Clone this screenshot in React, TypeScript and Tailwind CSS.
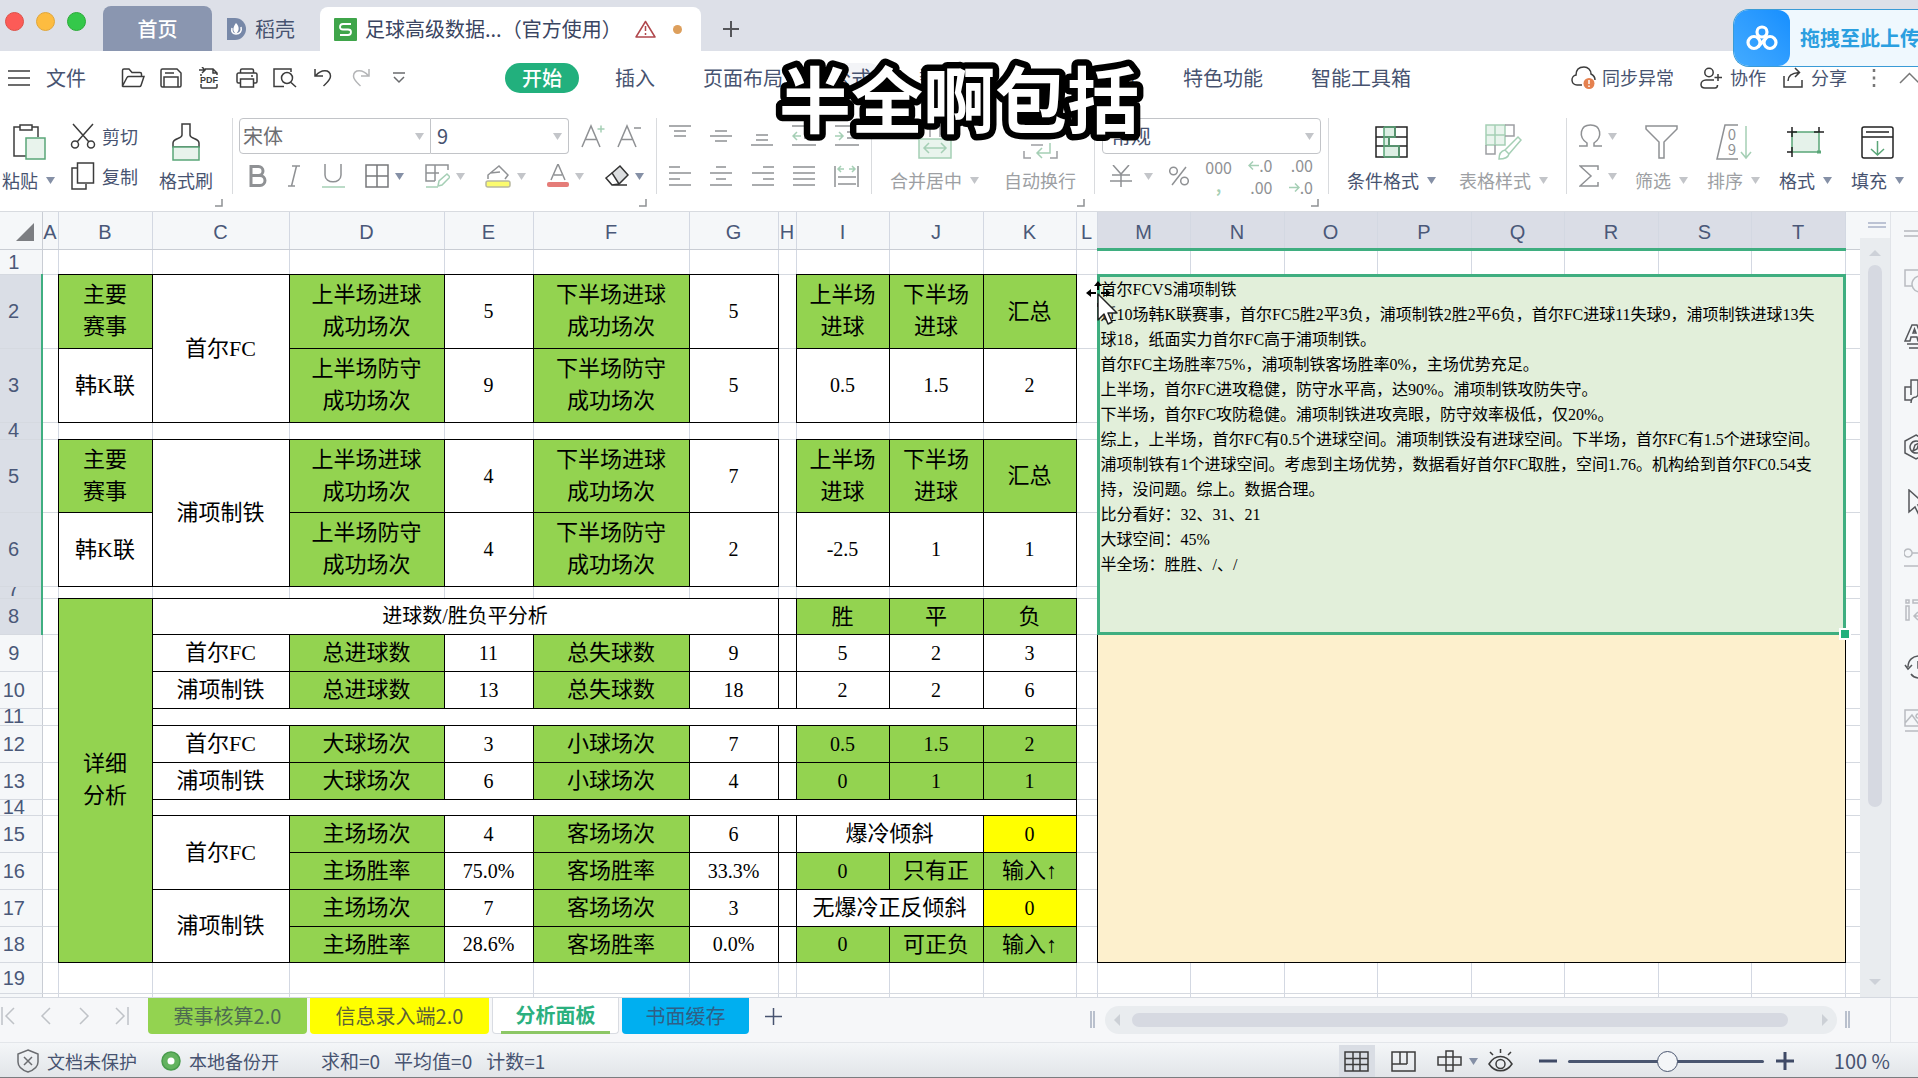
import React from 'react';

const SANS = "font-['Noto_Sans_CJK_SC',sans-serif]";

type CellKind = 'blank' | 'white' | 'green' | 'yellow' | 'note' | 'empty';

interface Cell {
  kind: CellKind;
  text?: string;
  rows?: number;
  cols?: number;
  small?: boolean;
}

interface Row {
  id: string;
  height: string;
  cells: Cell[];
}

const blank = (count = 1): Cell[] => Array.from({ length: count }, () => ({ kind: 'blank' }) as Cell);
const w = (text = '', rows = 1, cols = 1): Cell => ({ kind: 'white', text, rows, cols });
const g = (text: string, rows = 1): Cell => ({ kind: 'green', text, rows });
const y = (text: string): Cell => ({ kind: 'yellow', text });

const rows: Row[] = [
  { id: '1', height: 'h-[25px]', cells: blank(21) },
  {
    id: '2',
    height: 'h-[74px]',
    cells: [
      ...blank(), g('主要\n赛事'), w('首尔FC', 2), g('上半场进球\n成功场次'), w('5'), g('下半场进球\n成功场次'), w('5'),
      ...blank(), g('上半场\n进球'), g('下半场\n进球'), g('汇总'), ...blank(), { kind: 'note', rows: 7, cols: 8 }, ...blank(),
    ],
  },
  {
    id: '3',
    height: 'h-[74px]',
    cells: [
      ...blank(), w('韩K联'), g('上半场防守\n成功场次'), w('9'), g('下半场防守\n成功场次'), w('5'),
      ...blank(), w('0.5'), w('1.5'), w('2'), ...blank(2),
    ],
  },
  { id: '4', height: 'h-[17px]', cells: blank(13) },
  {
    id: '5',
    height: 'h-[73px]',
    cells: [
      ...blank(), g('主要\n赛事'), w('浦项制铁', 2), g('上半场进球\n成功场次'), w('4'), g('下半场进球\n成功场次'), w('7'),
      ...blank(), g('上半场\n进球'), g('下半场\n进球'), g('汇总'), ...blank(2),
    ],
  },
  {
    id: '6',
    height: 'h-[74px]',
    cells: [
      ...blank(), w('韩K联'), g('上半场防守\n成功场次'), w('4'), g('下半场防守\n成功场次'), w('2'),
      ...blank(), w('-2.5'), w('1'), w('1'), ...blank(2),
    ],
  },
  { id: '7', height: 'h-[12px]', cells: blank(13) },
  {
    id: '8',
    height: 'h-[36px]',
    cells: [
      ...blank(), g('详细\n分析', 11), { ...w('进球数/胜负平分析', 1, 5), small: true }, w(), g('胜'), g('平'), g('负'), ...blank(2),
    ],
  },
  {
    id: '9',
    height: 'h-[37px]',
    cells: [
      ...blank(), w('首尔FC'), g('总进球数'), w('11'), g('总失球数'), w('9'), w(), w('5'), w('2'), w('3'),
      ...blank(), { kind: 'empty', rows: 10, cols: 8 }, ...blank(),
    ],
  },
  {
    id: '10',
    height: 'h-[37px]',
    cells: [...blank(), w('浦项制铁'), g('总进球数'), w('13'), g('总失球数'), w('18'), w(), w('2'), w('2'), w('6'), ...blank(2)],
  },
  { id: '11', height: 'h-[17px]', cells: [...blank(), w('', 1, 9), ...blank(2)] },
  {
    id: '12',
    height: 'h-[37px]',
    cells: [...blank(), w('首尔FC'), g('大球场次'), w('3'), g('小球场次'), w('7'), w(), g('0.5'), g('1.5'), g('2'), ...blank(2)],
  },
  {
    id: '13',
    height: 'h-[37px]',
    cells: [...blank(), w('浦项制铁'), g('大球场次'), w('6'), g('小球场次'), w('4'), w(), g('0'), g('1'), g('1'), ...blank(2)],
  },
  { id: '14', height: 'h-[16px]', cells: [...blank(), w('', 1, 9), ...blank(2)] },
  {
    id: '15',
    height: 'h-[37px]',
    cells: [...blank(), w('首尔FC', 2), g('主场场次'), w('4'), g('客场场次'), w('6'), w(), w('爆冷倾斜', 1, 2), y('0'), ...blank(2)],
  },
  {
    id: '16',
    height: 'h-[37px]',
    cells: [...blank(), g('主场胜率'), w('75.0%'), g('客场胜率'), w('33.3%'), w(), g('0'), g('只有正'), g('输入↑'), ...blank(2)],
  },
  {
    id: '17',
    height: 'h-[37px]',
    cells: [...blank(), w('浦项制铁', 2), g('主场场次'), w('7'), g('客场场次'), w('3'), w(), w('无爆冷正反倾斜', 1, 2), y('0'), ...blank(2)],
  },
  {
    id: '18',
    height: 'h-[36px]',
    cells: [...blank(), g('主场胜率'), w('28.6%'), g('客场胜率'), w('0.0%'), w(), g('0'), g('可正负'), g('输入↑'), ...blank(2)],
  },
  { id: '19', height: 'h-[31px]', cells: blank(21) },
  { id: '', height: 'h-[4px]', cells: blank(21) },
];

const columns = [
  { id: 'A', width: 'w-[16px]' },
  { id: 'B', width: 'w-[94px]' },
  { id: 'C', width: 'w-[137px]' },
  { id: 'D', width: 'w-[155px]' },
  { id: 'E', width: 'w-[89px]' },
  { id: 'F', width: 'w-[156px]' },
  { id: 'G', width: 'w-[89px]' },
  { id: 'H', width: 'w-[18px]' },
  { id: 'I', width: 'w-[93px]' },
  { id: 'J', width: 'w-[94px]' },
  { id: 'K', width: 'w-[93px]' },
  { id: 'L', width: 'w-[21px]' },
  { id: 'M', width: 'w-[93px]' },
  { id: 'N', width: 'w-[94px]' },
  { id: 'O', width: 'w-[93px]' },
  { id: 'P', width: 'w-[94px]' },
  { id: 'Q', width: 'w-[93px]' },
  { id: 'R', width: 'w-[94px]' },
  { id: 'S', width: 'w-[93px]' },
  { id: 'T', width: 'w-[94px]' },
];

const noteLines = [
  '首尔FCVS浦项制铁',
  '近10场韩K联赛事，首尔FC5胜2平3负，浦项制铁2胜2平6负，首尔FC进球11失球9，浦项制铁进球13失',
  '球18，纸面实力首尔FC高于浦项制铁。',
  '首尔FC主场胜率75%，浦项制铁客场胜率0%，主场优势充足。',
  '上半场，首尔FC进攻稳健，防守水平高，达90%。浦项制铁攻防失守。',
  '下半场，首尔FC攻防稳健。浦项制铁进攻亮眼，防守效率极低，仅20%。',
  '综上，上半场，首尔FC有0.5个进球空间。浦项制铁没有进球空间。下半场，首尔FC有1.5个进球空间。',
  '浦项制铁有1个进球空间。考虑到主场优势，数据看好首尔FC取胜，空间1.76。机构给到首尔FC0.54支',
  '持，没问题。综上。数据合理。',
  '比分看好：32、31、21',
  '大球空间：45%',
  '半全场：胜胜、/、/',
];

const cellStyle: Record<CellKind, string> = {
  blank: '',
  white: 'border border-black bg-white',
  green: 'border border-black bg-[#93d350]',
  yellow: 'border border-black bg-[#ffff00]',
  note: 'relative bg-[#e2efda] align-top',
  empty: 'border border-black bg-[#fdf0cd]',
};

interface SvgProps {
  w: number;
  h: number;
  className?: string;
  children: React.ReactNode;
}

const Svg: React.FC<SvgProps> = ({ w: width, h: height, className = 'text-[#3c3c3c]', children }) => (
  <svg
    width={width}
    height={height}
    viewBox={`0 0 ${width} ${height}`}
    fill="none"
    stroke="currentColor"
    strokeWidth="1.5"
    className={`shrink-0 ${className}`}
    aria-hidden="true"
  >
    {children}
  </svg>
);

const Caret: React.FC<{ dim?: boolean }> = ({ dim }) => (
  <Svg w={9} h={7} className={dim ? 'text-[#c3c5c9]' : 'text-[#8590a6]'}>
    <path d="M0 0h9L4.500 7z" fill="currentColor" stroke="none" />
  </Svg>
);

const GREEN = '#5aa678';
const PALE = '#a5cfb5';

/* ---------- title bar ---------- */

const TitleBar: React.FC = () => (
  <header className="flex h-[51px] shrink-0 items-end bg-[#dde0e8] text-[20px] text-[#475370]">
    <div className="flex w-[103px] shrink-0 gap-3 self-start pl-[5px] pt-3">
      <button aria-label="关闭" className="size-[19px] rounded-full border border-[#dd5148] bg-[#fc5b57]" />
      <button aria-label="最小化" className="size-[19px] rounded-full border border-[#e0a63a] bg-[#fdbc40]" />
      <button aria-label="缩放" className="size-[19px] rounded-full border border-[#2bab38] bg-[#34c84a]" />
    </div>
    <button className="h-[45px] w-[109px] rounded-t-lg bg-[#8a96b0] font-medium text-white">首页</button>
    <button className="flex h-[45px] w-[108px] items-center gap-2 pl-[15px]">
      <Svg w={20} h={22}>
        <path d="M0 0h8a11 11 0 0 1 0 22H0z" fill="#7788a8" stroke="none" />
        <path d="M9 5c4 4 3 8 0 11-4-3-3-7 0-11z" fill="#fff" stroke="none" />
        <path d="M5 10c-1 4 1 6 4 6M14 9c1 4-1 7-5 7" stroke="#fff" />
      </Svg>
      稻壳
    </button>
    <div className="flex h-11 w-[381px] items-center rounded-t-lg bg-white pl-[14px] text-[#3a4562]">
      <Svg w={23} h={23}>
        <rect width="23" height="23" rx="1" fill="#3fa54a" stroke="none" />
        <path d="M17 6H9a3 3 0 0 0-3 3c0 2 1 2.500 3 2.500h5c2 0 3 .8 3 2.500a3 3 0 0 1-3 3H6" stroke="#fff" strokeWidth="1.800" />
      </Svg>
      <span className="w-[278px] whitespace-nowrap pl-2">足球高级数据...（官方使用）</span>
      <Svg w={21} h={18} className="text-[#b0474c]">
        <path d="M10.500 1.500L20 17H1z" strokeLinejoin="round" />
        <path d="M10.500 6v5M10.500 13v2" />
      </Svg>
      <span className="ml-[17px] size-[9px] rounded-full bg-[#dd9f5c]" />
    </div>
    <button aria-label="新建标签" className="flex h-[45px] w-[60px] items-center justify-center">
      <Svg w={16} h={16} className="text-[#55565a]">
        <path d="M8 0v16M0 8h16" strokeWidth="2" />
      </Svg>
    </button>
  </header>
);

const UploadBadge: React.FC = () => (
  <div className="absolute right-0 top-[9px] flex h-[58px] w-[185px] items-center overflow-hidden rounded-l-2xl border border-r-0 border-[#3a9bd6] bg-[#eff8fe]">
    <div className="flex h-full w-[56px] shrink-0 items-center justify-center rounded-xl bg-gradient-to-tr from-[#43abff] to-[#158fff]">
      <Svg w={32} h={28} className="text-white">
        <circle cx="16" cy="8" r="5" strokeWidth="3.200" />
        <circle cx="8" cy="18.500" r="6" strokeWidth="3.200" />
        <circle cx="24" cy="18.500" r="6" strokeWidth="3.200" />
        <path d="M12 23l8-9" strokeWidth="3.200" />
      </Svg>
    </div>
    <span className="whitespace-nowrap pl-[10px] text-[20px] font-bold text-[#2b9fe0]">拖拽至此上传</span>
  </div>
);

/* ---------- menu ---------- */

const quickIcons: { label: string; icon: React.ReactNode }[] = [
  {
    label: '打开',
    icon: (
      <Svg w={24} h={20}>
        <path d="M1.500 18V2.500A1.500 1.500 0 0 1 3 1h5l3 3.500h8A1.500 1.500 0 0 1 20.500 6v2M1.500 18l4.500-8.500A2 2 0 0 1 7.800 8.500H23l-3 9a1.500 1.500 0 0 1-1.500 1H2z" />
      </Svg>
    ),
  },
  {
    label: '保存',
    icon: (
      <Svg w={22} h={20}>
        <path d="M1 2.500A1.500 1.500 0 0 1 2.500 1H17l4 4v12.500a1.500 1.500 0 0 1-1.500 1.500h-17A1.500 1.500 0 0 1 1 17.500zM4 19V9h14v10M5 5h9" />
      </Svg>
    ),
  },
  {
    label: '输出为PDF',
    icon: (
      <Svg w={22} h={22}>
        <path d="M7 2h8l4 4v2M15 2v4h4M3 9v-2M3 17v3a1 1 0 0 0 1 1h14a1 1 0 0 0 1-1v-3M1 3h5M4 0l3 3-3 3" />
        <text x="11" y="16" textAnchor="middle" fontSize="9" fontWeight="700" fill="currentColor" stroke="none" fontFamily="Liberation Sans, sans-serif">PDF</text>
      </Svg>
    ),
  },
  {
    label: '打印',
    icon: (
      <Svg w={22} h={20}>
        <path d="M4.500 5V2.500A1.500 1.500 0 0 1 6 1h10a1.500 1.500 0 0 1 1.500 1.500V5M4.500 15H2.500A1.500 1.500 0 0 1 1 13.500v-7A1.500 1.500 0 0 1 2.500 5h17A1.500 1.500 0 0 1 21 6.500v7a1.500 1.500 0 0 1-1.500 1.500h-2M4.500 11h13v8h-13zM15 8h2" />
      </Svg>
    ),
  },
  {
    label: '打印预览',
    icon: (
      <Svg w={24} h={20}>
        <path d="M18 4V1H1v17.500h10" />
        <circle cx="14" cy="10" r="5.500" />
        <path d="M18 14.500l5 4.500" />
      </Svg>
    ),
  },
  {
    label: '撤销',
    icon: (
      <Svg w={20} h={19}>
        <path d="M2 1v7h8M2.500 8C8 1 17 1 17.500 8c0 4-4 7-7 10" />
      </Svg>
    ),
  },
  {
    label: '恢复',
    icon: (
      <Svg w={20} h={19} className="text-[#b4b5b7]">
        <path d="M18 1v7h-8M17.500 8C12 1 3 1 2.500 8c0 4 4 7 7 10" />
      </Svg>
    ),
  },
  {
    label: '更多',
    icon: (
      <Svg w={12} h={12} className="text-[#6a6b6e]">
        <path d="M0 1h12M1 5l5 5 5-5" />
      </Svg>
    ),
  },
];

const menus = ['插入', '页面布局', '公式', '数据', '审阅', '视图', '特色功能', '智能工具箱'];

const MenuBar: React.FC = () => (
  <nav className="flex h-[55px] shrink-0 items-center whitespace-nowrap pb-0.5 pl-2 text-[20px] text-[#475370]">
    <button className="flex items-center gap-4">
      <Svg w={22} h={16}>
        <path d="M0 1h22M0 8h22M0 15h22" />
      </Svg>
      文件
    </button>
    <div className="ml-[28px] flex items-center">
      {quickIcons.map((q) => (
        <button key={q.label} aria-label={q.label} className="flex w-[38px] justify-center">
          {q.icon}
        </button>
      ))}
    </div>
    <button className="ml-[87px] h-[30px] w-[74px] rounded-full bg-[#22b07d] font-medium leading-[30px] text-white">开始</button>
    <div className="ml-6 flex gap-6">
      {menus.map((m) => (
        <button key={m} className={`rounded-full px-3 leading-[30px] ${m === '公式' ? 'bg-[#f3f4f7]' : ''}`}>
          {m}
        </button>
      ))}
    </div>
    <div className="ml-auto flex items-center text-[18px]">
      <button className="flex items-center gap-1.5">
        <Svg w={25} h={24}>
          <path d="M11 19H6a5 5 0 0 1-1-9.900C5 1 11 1 13 1c4 0 7 3 7 7 2 1 4 3 4 6" />
          <circle cx="18" cy="17.500" r="5.500" fill="#e5814f" stroke="none" />
          <path d="M18 14v4M18 19.500v1.500" stroke="#fff" />
        </Svg>
        同步异常
      </button>
      <button className="ml-[26px] flex items-center gap-2">
        <Svg w={22} h={22}>
          <circle cx="9" cy="5.500" r="4.200" />
          <path d="M14 13H6c-3 0-5 2-5 4.500S3 21 5 21h10c1.500 0 2.500-1 2.500-3M18 7v7M14.500 10.500H22" />
        </Svg>
        协作
      </button>
      <button className="ml-[17px] flex items-center gap-2">
        <Svg w={20} h={21}>
          <path d="M1 9v11h18v-7M5 14c0-6 4-8 11-8.500M12 1l4.500 4.500L12 10" />
        </Svg>
        分享
      </button>
      <button aria-label="更多选项" className="ml-[25px]">
        <Svg w={4} h={18} className="text-[#777]">
          <path d="M2 0v3M2 7.500v3M2 15v3" strokeWidth="2.500" />
        </Svg>
      </button>
      <button aria-label="收起功能区" className="ml-[23px] w-[19px] overflow-hidden">
        <Svg w={20} h={12} className="text-[#777]">
          <path d="M1 11l9.500-9.500L20 11" />
        </Svg>
      </button>
    </div>
  </nav>
);

/* ---------- ribbon ---------- */

const Group: React.FC<{ className: string; corner?: boolean; last?: boolean; children: React.ReactNode }> = ({
  className,
  corner,
  last,
  children,
}) => (
  <div className={className}>
    <div className={`flex h-[76px] ${last ? '' : 'border-r border-[#d9dbde]'}`}>{children}</div>
    {corner && (
      <div className="mr-[10px] mt-[5px] flex justify-end">
        <Svg w={8} h={8} className="text-[#8f9194]">
          <path d="M7 0v7H0" />
        </Svg>
      </div>
    )}
  </div>
);

const BigButton: React.FC<{ label: string; icon: React.ReactNode; dim?: boolean; caret?: boolean; className?: string }> = ({
  label,
  icon,
  dim,
  caret,
  className = '',
}) => (
  <button className={`flex shrink-0 flex-col items-center whitespace-nowrap ${dim ? 'text-[#9d9fa3]' : 'text-[#475370]'} ${className}`}>
    <span className="flex h-12 items-center">{icon}</span>
    <span className="flex h-7 items-center gap-2">
      {label}
      {caret && <Caret dim={dim} />}
    </span>
  </button>
);

const Tool: React.FC<{ label: string; className?: string; caret?: 'dim' | 'dark'; children: React.ReactNode }> = ({
  label,
  className = '',
  caret,
  children,
}) => (
  <button aria-label={label} className={`flex h-9 shrink-0 items-center justify-center gap-1.5 ${className}`}>
    {children}
    {caret && <Caret dim={caret === 'dim'} />}
  </button>
);

const SelectBox: React.FC<{ label: string; value: string; className: string; textClass: string }> = ({
  label,
  value,
  className,
  textClass,
}) => (
  <div className={`relative flex h-9 items-center border border-[#c2c4c8] bg-white ${className}`}>
    <select aria-label={label} className={`h-full w-full appearance-none bg-transparent text-[20px] outline-none ${textClass}`}>
      <option>{value}</option>
    </select>
    <span className="pointer-events-none absolute right-1.5">
      <Caret dim />
    </span>
  </div>
);

const GRAY = 'text-[#8f9194]';

const alignTop: [string, string][] = [
  ['顶端对齐', 'M0 1h22M5 6h12M5 11h12'],
  ['垂直居中', 'M5 6h12M0 11h22M5 16h12'],
  ['底端对齐', 'M5 10h12M5 15h12M0 20h22'],
];

const alignBottom: [string, string][] = [
  ['左对齐', 'M0 2h11M0 8h22M0 14h11M0 20h22'],
  ['水平居中', 'M6 2h10M0 8h22M6 14h10M0 20h22'],
  ['右对齐', 'M11 2h11M0 8h22M11 14h11M0 20h22'],
  ['两端对齐', 'M0 2h22M0 8h22M0 14h22M0 20h22'],
];

const Ribbon: React.FC = () => (
  <section className="flex h-[106px] shrink-0 border-b border-[#d8dbe0] pt-3 text-[18px] text-[#475370]">
    <Group className="w-[233px] shrink-0" corner>
      <BigButton
        label="粘贴"
        caret
        className="w-[57px]"
        icon={
          <Svg w={34} h={36}>
            <path d="M8 3H2v29h12M20 3h6v10" />
            <rect x="8" y="1" width="12" height="5" />
            <rect x="14" y="14" width="19" height="21" fill="#e8f3ec" stroke={GREEN} />
          </Svg>
        }
      />
      <div className="ml-[13px] flex flex-col gap-1">
        <button className="flex h-9 items-center gap-1.5">
          <Svg w={26} h={26}>
            <path d="M3 1l16 18M23 1L7 19" />
            <circle cx="5" cy="21.500" r="3.500" />
            <circle cx="21" cy="21.500" r="3.500" />
          </Svg>
          剪切
        </button>
        <button className="flex h-9 items-center gap-1.5">
          <Svg w={26} h={28}>
            <path d="M7 6H2v21h14v-5" />
            <rect x="7.500" y="1" width="16" height="20" />
          </Svg>
          复制
        </button>
      </div>
      <BigButton
        label="格式刷"
        className="ml-[21px]"
        icon={
          <Svg w={30} h={38}>
            <path d="M11 1h8v11c0 4 9 3 9 8v4H2v-4c0-5 9-4 9-8z" />
            <path d="M2 24h26v13H2z" fill="#e8f3ec" stroke={GREEN} />
          </Svg>
        }
      />
    </Group>

    <Group className="w-[424px] shrink-0" corner>
      <div className="flex flex-1 flex-col gap-1">
        <div className="flex pl-1.5">
          <SelectBox label="字体" value="宋体" className="w-[192px] rounded-l" textClass="pl-[3px] text-[#6d6e72]" />
          <SelectBox label="字号" value="9" className="w-[138px] rounded-r border-l-0" textClass="pl-1.5 text-[#475370]" />
          <Tool label="增大字号" className="ml-3 w-6">
            <Svg w={24} h={24} className={GRAY}>
              <path d="M1 23L10 2l9 21M4.500 15.500h11" />
              <path d="M16.500 5h7M20 1.500v7" stroke={PALE} />
            </Svg>
          </Tool>
          <Tool label="减小字号" className="ml-3 w-6">
            <Svg w={24} h={24} className={GRAY}>
              <path d="M1 23L10 2l9 21M4.500 15.500h11M17 4h7" />
            </Svg>
          </Tool>
        </div>
        <div className="flex justify-between pl-4 pr-3">
          <Tool label="加粗">
            <Svg w={18} h={22} className={GRAY}>
              <path d="M2 1.500h7.500a4.500 4.500 0 0 1 0 9H2zM2 10.500h9a5 5 0 0 1 0 10H2z" strokeWidth="3" />
            </Svg>
          </Tool>
          <Tool label="倾斜">
            <Svg w={14} h={22} className={GRAY}>
              <path d="M5 1h8M1 21h7M9.500 1l-5 20" />
            </Svg>
          </Tool>
          <Tool label="下划线">
            <Svg w={23} h={24} className={GRAY}>
              <path d="M3 0v11c0 9 16 9 16 0V0" />
              <path d="M0 23h23" stroke={PALE} />
            </Svg>
          </Tool>
          <Tool label="边框" caret="dark">
            <Svg w={24} h={24} className="text-[#77787b]">
              <path d="M1 1h22v22H1zM12 1v22M1 12h22" />
            </Svg>
          </Tool>
          <Tool label="单元格样式" caret="dim">
            <Svg w={25} h={24} className={GRAY}>
              <path d="M10 17H1V1h22v5M1 9h13M10 1v16" />
              <path d="M1 23h12M13 22l1-5 8-7 3 3-8 8z" stroke={PALE} />
            </Svg>
          </Tool>
          <Tool label="填充颜色" caret="dim">
            <Svg w={26} h={24} className={GRAY}>
              <path d="M3 15v-4l11-9 9 9-3 4M5 9l10-1" />
              <rect x="1" y="17" width="24" height="6" rx="2" fill="#fbfb6e" stroke="#b8b8a0" />
            </Svg>
          </Tool>
          <Tool label="字体颜色" caret="dim">
            <Svg w={22} h={24} className={GRAY}>
              <path d="M4 16L11 0l7 16M7 11h8" />
              <rect y="18" width="22" height="5" rx="2" fill="#e57c78" stroke="none" />
            </Svg>
          </Tool>
          <Tool label="清除" caret="dark">
            <Svg w={25} h={24} className="text-[#333]">
              <path d="M8 9l8-7 8 9-9 9z" fill="#dcdee0" />
              <path d="M8 9l-6 5 6 7h15M8 21l7-1" />
            </Svg>
          </Tool>
        </div>
      </div>
    </Group>

    <Group className="w-[215px] shrink-0">
      <div className="flex flex-1 flex-col gap-1 px-3">
        <div className="flex justify-between">
          {alignTop.map(([label, d]) => (
            <Tool key={label} label={label}>
              <Svg w={22} h={22} className={GRAY}>
                <path d={d} />
              </Svg>
            </Tool>
          ))}
          <Tool label="减少缩进">
            <Svg w={24} h={22} className={GRAY}>
              <path d="M0 1h24M12 7h12M12 13h12M0 20h24" />
              <path d="M9 11H1M5 7l-4 4 4 4" stroke={PALE} />
            </Svg>
          </Tool>
          <Tool label="增加缩进">
            <Svg w={24} h={22} className={GRAY}>
              <path d="M0 1h24M12 7h12M12 13h12M0 20h24" />
              <path d="M0 11h8M4 7l4 4-4 4" stroke={PALE} />
            </Svg>
          </Tool>
        </div>
        <div className="flex justify-between">
          {alignBottom.map(([label, d]) => (
            <Tool key={label} label={label}>
              <Svg w={22} h={22} className={GRAY}>
                <path d={d} />
              </Svg>
            </Tool>
          ))}
          <Tool label="分散对齐">
            <Svg w={25} h={22} className={GRAY}>
              <path d="M1 1v21M24 1v21M4 12h18M4 19h18" />
              <path d="M4 4h6M15 4h6M7 1L4 4l3 3M18 1l3 3-3 3" stroke={PALE} />
            </Svg>
          </Tool>
        </div>
      </div>
    </Group>

    <Group className="w-[223px] shrink-0" corner>
      <div className="flex flex-1 justify-between px-[18px]">
        <BigButton
          label="合并居中"
          dim
          caret
          icon={
            <Svg w={34} h={34}>
              <path d="M1 12V1h32v11M12 1v11M22 1v11" stroke="#9d9fa3" />
              <path d="M1 14h32v19H1z" fill="#e9f4ed" stroke={PALE} />
              <path d="M6 23h22M11 18l-5 5 5 5M23 18l5 5-5 5" stroke={PALE} />
            </Svg>
          }
        />
        <BigButton
          label="自动换行"
          dim
          icon={
            <Svg w={35} h={34}>
              <path d="M1 8V1h8M26 1h8v7M1 26v7h7M27 33h7v-7M8 12h19M8 20h12" stroke="#9d9fa3" />
              <path d="M27 18v10H14M19 23l-5 5 5 5" stroke={PALE} />
            </Svg>
          }
        />
      </div>
    </Group>

    <Group className="w-[234px] shrink-0" corner>
      <div className="flex flex-1 flex-col gap-1 px-[7px]">
        <SelectBox label="数字格式" value="常规" className="rounded" textClass="pl-2 text-[#475370]" />
        <div className="flex justify-between px-2">
          <Tool label="货币格式" caret="dim" className="gap-3">
            <Svg w={22} h={22} className={GRAY}>
              <path d="M3 0l8 9 8-9M11 9v13M2 10h18M0 16h22" />
            </Svg>
          </Tool>
          <Tool label="百分比">
            <Svg w={20} h={20} className={GRAY}>
              <circle cx="4.500" cy="5" r="3.800" />
              <circle cx="15.500" cy="15" r="3.800" />
              <path d="M17 1L3 19" />
            </Svg>
          </Tool>
          <Tool label="千位分隔" className="flex-col gap-0 text-[16px] leading-3 text-[#8f9194]">
            <span>000</span>
            <span className="font-bold text-[#a5cfb5]">,</span>
          </Tool>
          <Tool label="减少小数位" className="flex-col items-end gap-0 text-[16px] leading-4 text-[#8f9194]">
            <span className="flex items-center">
              <Svg w={11} h={9}>
                <path d="M11 4.500H1M5 .5l-4 4 4 4" stroke={PALE} />
              </Svg>
              .0
            </span>
            <span>.00</span>
          </Tool>
          <Tool label="增加小数位" className="flex-col items-end gap-0 text-[16px] leading-4 text-[#8f9194]">
            <span>.00</span>
            <span className="flex items-center">
              <Svg w={11} h={9}>
                <path d="M0 4.500h10M6 .5l4 4-4 4" stroke={PALE} />
              </Svg>
              .0
            </span>
          </Tool>
        </div>
      </div>
    </Group>

    <Group className="w-[238px] shrink-0">
      <div className="flex flex-1 justify-between px-[18px]">
        <BigButton
          label="条件格式"
          caret
          icon={
            <Svg w={33} h={32} className="text-[#222]">
              <path d="M9 1h11v10H9zM9 11h5v9H9zM9 20h15v11H9z" fill="#ddefe4" stroke="none" />
              <path d="M1 1h31v30H1zM1 11h31M1 20h31M20 1v10M14 11v9M24 20v11" />
              <path d="M9 1v30M9 1h11v10H9M14 11v9H9M9 20h15v11H9" stroke={GREEN} />
            </Svg>
          }
        />
        <BigButton
          label="表格样式"
          dim
          caret
          icon={
            <Svg w={37} h={36}>
              <path d="M1 1h19v20H1z" fill="#e9f4ed" stroke={PALE} />
              <path d="M1 11h19M10 1v20" stroke={PALE} />
              <path d="M20 1h9v11h-9M1 21v9h9v-9" stroke="#9d9fa3" />
              <path d="M20 26L33 13l3 3-12 14M14 35c0-5 2-8 6-9l4 4c-1 4-5 5-10 5z" stroke={PALE} />
            </Svg>
          }
        />
      </div>
    </Group>

    <Group className="min-w-0 flex-1" last>
      <div className="flex w-[48px] shrink-0 flex-col gap-1 pl-[14px]">
        <Tool label="符号" caret="dim">
          <Svg w={23} h={24} className={GRAY}>
            <path d="M0 22h8v-3C-1 13 1 1 11.500 1S24 13 15 19v3h8" />
          </Svg>
        </Tool>
        <Tool label="求和" caret="dim">
          <Svg w={23} h={22} className={GRAY}>
            <path d="M19 5V1H1l11 10L1 21h18v-4" />
          </Svg>
        </Tool>
      </div>
      <div className="flex flex-1 justify-between pl-[20px] pr-[14px]">
        <BigButton
          label="筛选"
          dim
          caret
          icon={
            <Svg w={33} h={34}>
              <path d="M1 1h31v3L19 17v16h-5V17L1 4z" stroke="#8f9194" />
            </Svg>
          }
        />
        <BigButton
          label="排序"
          dim
          caret
          icon={
            <Svg w={36} h={36}>
              <path d="M22 1H9L1 35h21" stroke="#8f9194" />
              <text x="16" y="16" textAnchor="middle" fontSize="15" fill="#8f9194" stroke="none">0</text>
              <text x="16" y="31" textAnchor="middle" fontSize="15" fill="#8f9194" stroke="none">9</text>
              <path d="M30 2v32M25 28l5 6 5-6" stroke={PALE} />
            </Svg>
          }
        />
        <BigButton
          label="格式"
          caret
          icon={
            <Svg w={37} h={30} className="text-[#222]">
              <path d="M5 5h27v20H5z" fill="#e5f2ea" stroke={GREEN} />
              <path d="M5 0v10M0 5h10M32 0v5M27 5h10M5 20v10M0 25h5" />
              <path d="M30 25h4" stroke={GREEN} strokeWidth="3" />
            </Svg>
          }
        />
        <BigButton
          label="填充"
          caret
          icon={
            <Svg w={33} h={33} className="text-[#222]">
              <rect x="1" y="1" width="31" height="31" rx="2" />
              <path d="M1 11h31M5 6h23" />
              <path d="M16.500 15v14M10 23l6.500 6 6.500-6" stroke={GREEN} />
            </Svg>
          }
        />
      </div>
    </Group>
  </section>
);

/* ---------- sheet ---------- */

const MoveCursor: React.FC = () => (
  <svg width="32" height="46" viewBox="0 0 32 46" className="absolute -left-3 top-1.5" aria-hidden="true">
    <path d="M12 0l4 5h-8zM0 12l5-4v8zM25 12l-5-4v8z" fill="#000" />
    <path d="M2 12h8M15 12h8M12 3v6M12 22v4" stroke="#000" strokeWidth="2" />
    <path d="M12 13v26l6-6 4 10 4-2-4-9h9z" fill="#fff" stroke="#222" strokeWidth="1.500" strokeLinejoin="round" />
  </svg>
);

const Note: React.FC = () => (
  <>
    <div className="whitespace-nowrap pl-[3px] pt-0.5 text-[16px] leading-[25px]">
      {noteLines.map((line) => (
        <p key={line}>{line}</p>
      ))}
    </div>
    <div className="pointer-events-none absolute -inset-px border-[3px] border-[#3fae80]" />
    <div className="absolute -bottom-1.5 -right-1.5 size-3 border-2 border-white bg-[#22b07d]" />
    <MoveCursor />
  </>
);

const SheetCell: React.FC<{ cell: Cell }> = ({ cell }) => {
  if (cell.kind === 'note') {
    return (
      <td rowSpan={cell.rows} colSpan={cell.cols} className={`p-0 text-left ${cellStyle.note}`}>
        <Note />
      </td>
    );
  }
  const text = cell.text ?? '';
  const numeric = /^[-\d.%]+$/.test(text);
  const size = cell.small || numeric ? 'text-[20px]' : 'text-[22px]';
  const wrap = text.includes('\n') ? 'whitespace-pre-line leading-8' : '';
  return (
    <td rowSpan={cell.rows} colSpan={cell.cols} className={`p-0 ${size} ${wrap} ${cellStyle[cell.kind]}`}>
      {text}
    </td>
  );
};

const selectedRows = ['2', '3', '4', '5', '6', '7', '8'];

// narrow rows clip their own number
const narrowRows: Record<string, string> = {
  '4': 'h-[15px] overflow-hidden leading-4',
  '7': 'h-2.5 overflow-hidden leading-4',
  '11': 'h-[15px] overflow-hidden leading-4',
  '14': 'h-[15px] overflow-hidden leading-4',
};

const Sheet: React.FC = () => (
  <div className="min-w-0 flex-1 overflow-hidden bg-white">
    <table className="w-full table-fixed border-collapse text-center font-['Liberation_Serif','Noto_Sans_CJK_SC',serif] text-black">
      <colgroup>
        <col className="w-[42px] border-r border-[#c9cdd4]" />
        {columns.map((c) => (
          <col key={c.id} className={`${c.width} border-r border-[#d3d8e2]`} />
        ))}
        <col />
      </colgroup>
      <thead>
        <tr className="h-[37px] border-b border-[#c9cdd4] bg-[#f5f7f9] font-['Liberation_Sans',sans-serif] text-[20px] text-[#4a5878]">
          <th className="p-0 pt-1">
            <div className="flex justify-end pr-2">
              <Svg w={18} h={18} className="text-[#7c7e82]">
                <path d="M18 0v18H0z" fill="currentColor" stroke="none" />
              </Svg>
            </div>
          </th>
          {columns.map((c) => (
            <th
              key={c.id}
              scope="col"
              className={`p-0 pt-1 font-normal ${c.id >= 'M' ? 'border-b-[3px] border-b-[#3fae80] bg-[#dadde6]' : ''}`}
            >
              <span className="flex justify-center">{c.id}</span>
            </th>
          ))}
          <th className="p-0" />
        </tr>
      </thead>
      <tbody>
        {rows.map((row) => (
          <tr key={row.id} className={`${row.height} border-b border-[#d5d9e0]`}>
            <th
              scope="row"
              className={`p-0 font-['Liberation_Sans',sans-serif] text-[20px] font-normal text-[#4a5878] ${
                selectedRows.includes(row.id) ? 'border-r-2 border-r-[#3fae80] bg-[#dadee6]' : 'bg-[#f5f7f9]'
              }`}
            >
              {row.id && (
                <div className={`flex items-end justify-center pr-[14px] ${narrowRows[row.id] ?? 'leading-[22px]'}`}>{row.id}</div>
              )}
            </th>
            {row.cells.map((cell, i) => (
              <SheetCell key={i} cell={cell} />
            ))}
          </tr>
        ))}
      </tbody>
    </table>
  </div>
);

const VerticalScroll: React.FC = () => (
  <div className="flex w-[30px] shrink-0 flex-col items-center bg-[#e9ecef]">
    <div className="flex h-[26px] w-full items-center justify-center bg-[#f5f7f9] pl-1">
      <Svg w={18} h={6} className="text-[#a9b3c8]">
        <path d="M0 1h18M0 5h18" />
      </Svg>
    </div>
    <Svg w={12} h={6} className="mt-3 text-[#cdd1d8]">
      <path d="M6 0l6 6H0z" fill="currentColor" stroke="none" />
    </Svg>
    <div className="mt-[9px] h-[542px] w-[14px] rounded-full bg-[#d6d9e1]" />
    <Svg w={12} h={6} className="mb-3 mt-auto text-[#cdd1d8]">
      <path d="M0 0h12L6 6z" fill="currentColor" stroke="none" />
    </Svg>
  </div>
);

const sideTools: { label: string; dim?: boolean; d: string }[] = [
  { label: '形状', dim: true, d: 'M8 17H1V1h16v6M16 7a8 8 0 1 0 .1 0z' },
  { label: '艺术字', d: 'M1 17L8 1h5l6 16h-5l-1-4H7l-1 4zM9 9l1.500-4L12 9zM3 20h16M5 24h14' },
  { label: '图表', d: 'M8 21H1V8h6M7 16V1h7v15M14 6h6v8M7 24c0-4 2-6 5-6l10-8' },
  { label: '导航', d: 'M12 1l11 6v12l-11 6L1 19V7zM12 7a6 6 0 1 0 .1 0zM15 9l-2 6-4 2 2-6z' },
  { label: '选择', d: 'M5 1v22l6-5 4 8 3-2-4-8h8z' },
  { label: '属性', dim: true, d: 'M4 5a4 4 0 1 0 .1 0zM8 9h16M0 22h24' },
  { label: '分列', dim: true, d: 'M2 1h3v3H2zM2 7h3v14H2zM9 1h12v3H9zM21 17H10M14 13l-4 4 4 4' },
  { label: '历史', d: 'M4 13C4 6 9 2 15 2M1 11l3 4 4-4M7 20c2 3 5 4 9 4M14 7v7h6' },
  { label: '图片', dim: true, d: 'M1 1h22v16H1zM1 14l7-8 8 11M14 5a2 2 0 1 0 .1 0zM1 22h22' },
];

const SidePane: React.FC = () => (
  <aside className="flex w-[28px] shrink-0 flex-col overflow-hidden border-l border-[#e1e4e9] bg-[#f5f7f9] pl-[13px] pt-[18px]">
    <Svg w={24} h={8} className="text-[#b5b8bd]">
      <path d="M0 1h24M0 6h24" />
    </Svg>
    <div className="flex flex-col pt-[16px]">
      {sideTools.map((t) => (
        <button key={t.label} aria-label={t.label} className="flex h-[55px] items-center">
          <Svg w={26} h={26} className={t.dim ? 'text-[#b9bcc1]' : 'text-[#55575b]'}>
            <path d={t.d} />
          </Svg>
        </button>
      ))}
    </div>
  </aside>
);

/* ---------- bottom bars ---------- */

const navIcons: [string, string][] = [
  ['第一张', 'M1 0v18M13 1L5 9l8 8'],
  ['上一张', 'M11 1L3 9l8 8'],
  ['下一张', 'M3 1l8 8-8 8'],
  ['最后一张', 'M1 1l8 8-8 8M13 0v18'],
];

const TabBar: React.FC = () => (
  <div className="flex h-[45px] shrink-0 border-t border-[#d5d9e0] bg-[#f6f7f9] text-[20px]">
    <div className="flex h-9 w-[148px] shrink-0 items-center gap-6 overflow-hidden pl-px">
      {navIcons.map(([label, d]) => (
        <button key={label} aria-label={label}>
          <Svg w={14} h={18} className="text-[#bfc2c7]">
            <path d={d} />
          </Svg>
        </button>
      ))}
    </div>
    <div className="flex h-9 shrink-0 gap-[3px] leading-9">
      <button className="w-[159px] rounded-b bg-[#93d350] text-[#4d6b50]">赛事核算2.0</button>
      <button className="w-[179px] rounded-b bg-[#ffff00] text-[#5c5f38]">信息录入端2.0</button>
      <button className="w-[127px] rounded-b border border-t-0 border-[#d9dce2] bg-white px-2 font-bold text-[#2bb07f]">
        <span className="block h-9 border-b-[3px] border-[#8cc765] leading-[34px]">分析面板</span>
      </button>
      <button className="w-[127px] rounded-b bg-[#00aff0] text-[#2f5f86]">书面缓存</button>
    </div>
    <button aria-label="新建工作表" className="flex h-9 w-[49px] items-center justify-center">
      <Svg w={17} h={17} className="text-[#475370]">
        <path d="M8.500 0v17M0 8.500h17" />
      </Svg>
    </button>
    <div className="ml-auto flex h-[43px] w-[800px] items-center">
      <Svg w={5} h={17} className="text-[#a5afbf]">
        <path d="M1 0v17M4 0v17" />
      </Svg>
      <div className="ml-[10px] flex h-7 flex-1 items-center rounded-full bg-[#e9ecef] px-[9px] text-[#ccd0d6]">
        <Svg w={6} h={12} className="">
          <path d="M6 0v12L0 6z" fill="currentColor" stroke="none" />
        </Svg>
        <div className="ml-3 mr-[34px] h-[14px] flex-1 rounded-full bg-[#d6d9e1]" />
        <Svg w={6} h={12} className="">
          <path d="M0 0v12l6-6z" fill="currentColor" stroke="none" />
        </Svg>
      </div>
      <Svg w={5} h={17} className="ml-2 mr-[40px] text-[#a5afbf]">
        <path d="M1 0v17M4 0v17" />
      </Svg>
    </div>
    <div className="w-[28px] shrink-0 border-l border-[#e1e4e9]" />
  </div>
);

const StatusBar: React.FC = () => (
  <footer className="flex h-9 shrink-0 items-center whitespace-nowrap border-b border-t border-b-[#7b7d80] border-t-[#e3e6ea] bg-gradient-to-b from-[#f4f6f8] to-[#e2e5e9] pl-[17px] pt-0.5 text-[18px] text-[#475370]">
    <Svg w={22} h={24} className="text-[#6a6c70]">
      <path d="M11 1l10 4v8c0 5-4 8-10 10C5 21 1 18 1 13V5zM7 8l8 8M15 8l-8 8" />
    </Svg>
    <span className="ml-2">文档未保护</span>
    <Svg w={20} h={20} className="ml-6">
      <circle cx="10" cy="10" r="9" fill="#63b35f" stroke="#4a9c4d" />
      <circle cx="10" cy="10" r="3.500" fill="#fff" stroke="none" />
    </Svg>
    <span className="ml-2">本地备份开</span>
    <div className="ml-[42px] flex gap-[14px] text-[19px]">
      <span>求和=0</span>
      <span>平均值=0</span>
      <span>计数=1</span>
    </div>
    <div className="ml-auto flex h-full items-center pr-7">
      <button aria-label="普通视图" className="flex h-full w-9 items-center justify-center bg-[#d9dde4]">
        <Svg w={25} h={21}>
          <path d="M1 1h23v19H1zM9 1v19M16 1v19M1 7.500h23M1 13.500h23" />
        </Svg>
      </button>
      <button aria-label="分页预览" className="ml-4">
        <Svg w={25} h={21}>
          <path d="M1 1h23v19H1zM9 1v12M16 1v12M1 13h15" />
        </Svg>
      </button>
      <button aria-label="阅读模式" className="ml-[21px] flex items-center gap-[7px]">
        <Svg w={25} h={22}>
          <path d="M9 1h7v20H9zM1 7h23v8H1z" />
        </Svg>
        <Caret />
      </button>
      <button aria-label="护眼模式" className="ml-[10px]">
        <Svg w={25} h={24}>
          <path d="M1 15c6-10 17-10 23 0-6 9-17 9-23 0zM12.500 0v4M2 3l3 3M23 3l-3 3" />
          <circle cx="12.500" cy="15" r="4.500" />
        </Svg>
      </button>
      <button aria-label="缩小" className="ml-[26px]">
        <Svg w={18} h={18} className="text-[#3f4a66]">
          <path d="M0 9h18" strokeWidth="3" />
        </Svg>
      </button>
      <input
        type="range"
        aria-label="缩放比例"
        min="0"
        max="200"
        defaultValue="102"
        className="ml-[11px] h-5 w-[196px] appearance-none bg-transparent [&::-webkit-slider-runnable-track]:h-[3px] [&::-webkit-slider-runnable-track]:rounded-full [&::-webkit-slider-runnable-track]:bg-[#4a5670] [&::-webkit-slider-thumb]:-mt-[9px] [&::-webkit-slider-thumb]:size-[21px] [&::-webkit-slider-thumb]:appearance-none [&::-webkit-slider-thumb]:rounded-full [&::-webkit-slider-thumb]:border [&::-webkit-slider-thumb]:border-[#4a5670] [&::-webkit-slider-thumb]:bg-[#f4f6f8]"
      />
      <button aria-label="放大" className="ml-3">
        <Svg w={18} h={18} className="text-[#3f4a66]">
          <path d="M0 9h18M9 0v18" strokeWidth="3" />
        </Svg>
      </button>
      <span className="ml-10 text-[20px]">100 %</span>
    </div>
  </footer>
);

const Caption: React.FC = () => (
  <svg width="100%" height="100" className="pointer-events-none absolute inset-x-0 top-[50px]">
    <text
      x="50%"
      y="77"
      textAnchor="middle"
      fontSize="72"
      fontWeight="700"
      fill="#fff"
      stroke="#000"
      strokeWidth="13"
      strokeLinejoin="round"
      paintOrder="stroke"
    >
      半全啊包括
    </text>
  </svg>
);

const App: React.FC = () => (
  <div className={`relative flex h-screen flex-col overflow-hidden bg-white ${SANS}`}>
    <TitleBar />
    <MenuBar />
    <Ribbon />
    <main className="flex min-h-0 flex-1 overflow-hidden">
      <Sheet />
      <VerticalScroll />
      <SidePane />
    </main>
    <TabBar />
    <StatusBar />
    <UploadBadge />
    <Caption />
  </div>
);

export default App;
